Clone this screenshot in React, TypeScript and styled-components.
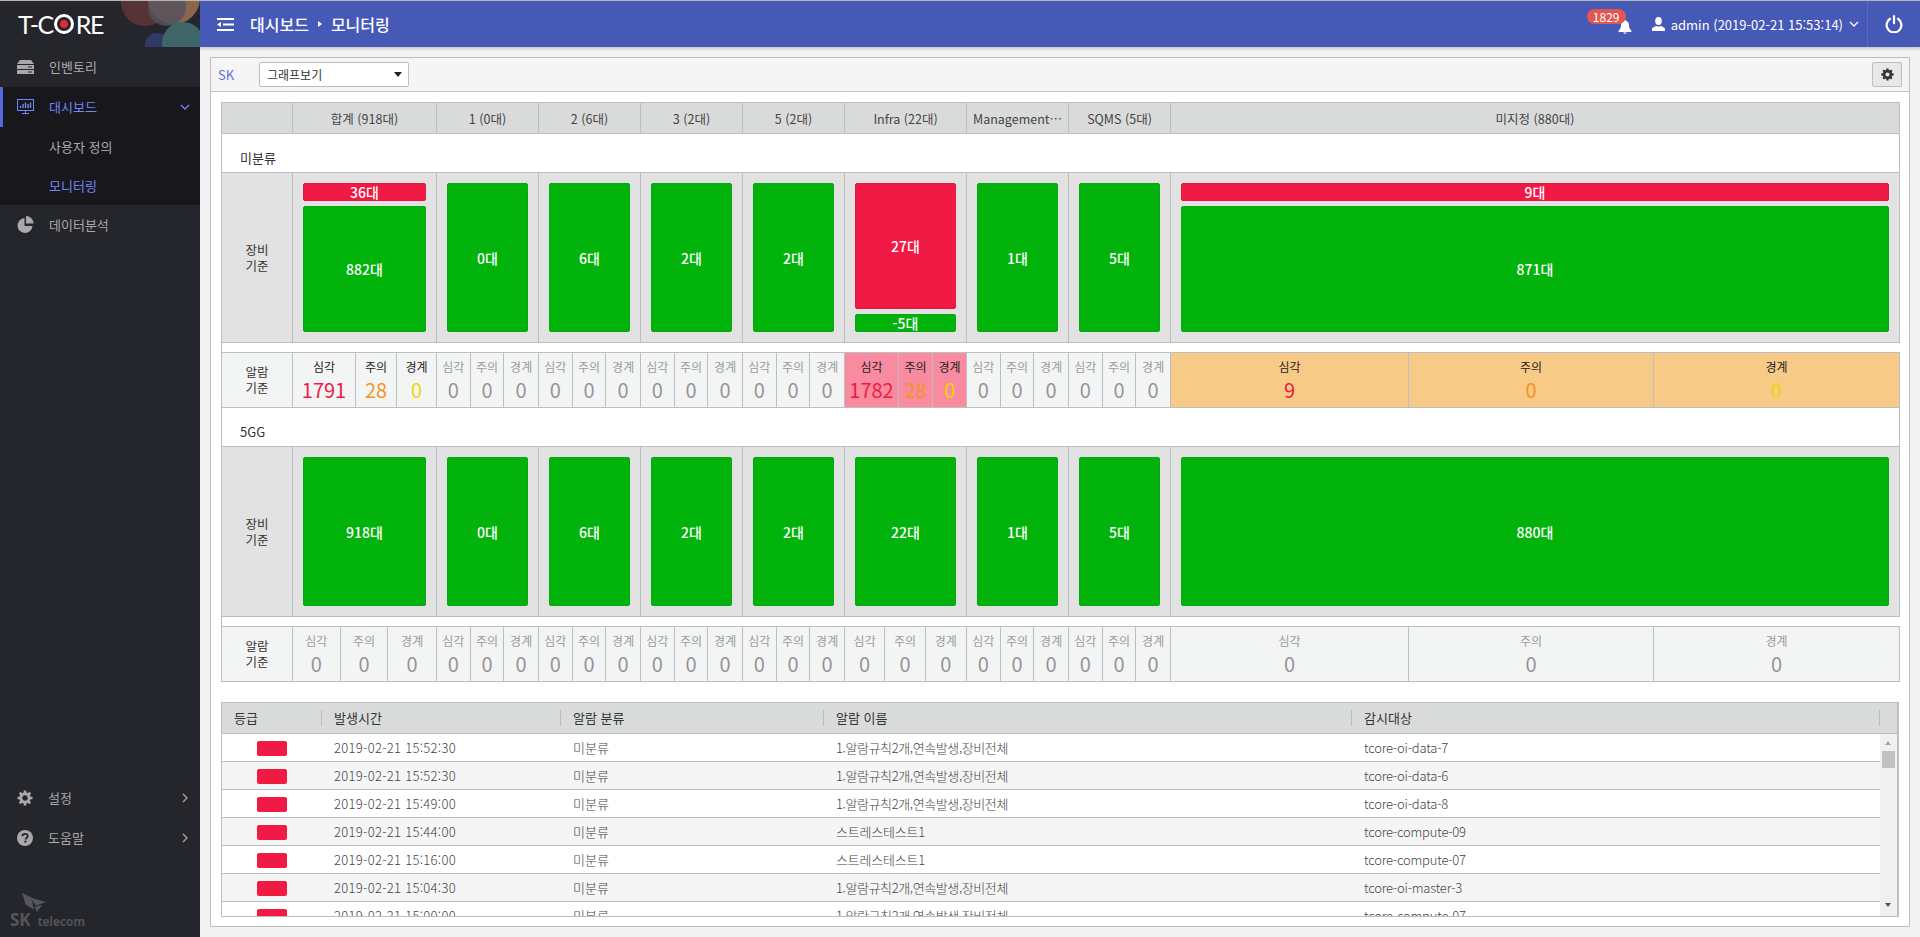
import React from 'react';
import styled, { createGlobalStyle } from 'styled-components';

const COLUMNS = '71px 144px 102px 102px 102px 102px 122px 102px 102px 729px';
const FONT = '"Noto Sans CJK KR", "Noto Sans", sans-serif';

const GlobalStyle = createGlobalStyle`
  html, body {
    margin: 0;
    padding: 0;
    height: 100%;
    background: #f3f3f3;
    overflow: hidden;
  }
  * { box-sizing: border-box; }
  #root { height: 100%; }
`;

const Page = styled.div`
  display: flex;
  height: 937px;
  border-top: 1px solid #b5b5b5;
  font-family: ${FONT};
  font-size: 13px;
  color: #333;
`;

/* sidebar */
const Sidebar = styled.aside`
  width: 200px;
  flex: none;
  display: flex;
  flex-direction: column;
  background: #25262c;
  position: relative;
`;

const LogoBar = styled.div`
  height: 46px;
  flex: none;
  position: relative;
  overflow: hidden;
  display: flex;
  align-items: center;
  padding-left: 18px;
  background: #25262c;
`;

const LogoBubbles = styled.svg`
  position: absolute;
  left: 0;
  top: 0;
`;

const LogoText = styled.div`
  position: relative;
  display: flex;
  align-items: center;
  font-family: "Lato", sans-serif;
  font-size: 25px;
  line-height: 26px;
  color: #fff;
  letter-spacing: -1.5px;
`;

const LogoRing = styled.svg`
  margin: 0 2px 0 1px;
`;

const NavItem = styled.div<{ $active?: boolean }>`
  height: 40px;
  display: flex;
  align-items: center;
  padding: 0 10px 1px 17px;
  gap: 15px;
  font-size: 13px;
  color: ${p => (p.$active ? '#6f86f5' : '#a9a9a9')};
  background: ${p => (p.$active ? '#18181c' : 'transparent')};
  box-shadow: ${p => (p.$active ? 'inset 3px 0 0 #5468e0' : 'none')};
  svg.icon { flex: none; }
  span { flex: 1; }
`;

const SubMenu = styled.div`
  background: #18181c;
  height: 78px;
  display: flex;
  flex-direction: column;
`;

const SubItem = styled.div<{ $active?: boolean }>`
  flex: 1;
  display: flex;
  align-items: center;
  padding-left: 49px;
  font-size: 13px;
  color: ${p => (p.$active ? '#6f86f5' : '#a9a9a9')};
`;

const BottomNav = styled.div`
  margin-top: auto;
  padding-bottom: 79px;
`;

const Telecom = styled.div`
  position: absolute;
  left: 10px;
  bottom: 6px;
  display: flex;
  align-items: baseline;
  gap: 7px;
  color: #55565b;
  font-family: "Noto Sans", sans-serif;
  svg { position: absolute; left: 12px; top: -19px; }
`;

const TelecomSk = styled.span`
  font-size: 17px;
  font-weight: 700;
  line-height: 18px;
`;

const TelecomName = styled.span`
  font-size: 12px;
  font-weight: 600;
  line-height: 18px;
`;

/* top bar */
const Main = styled.main`
  flex: 1;
  min-width: 0;
  display: flex;
  flex-direction: column;
`;

const TopBar = styled.header`
  height: 46px;
  flex: none;
  display: flex;
  align-items: center;
  background: #4759b7;
  color: #fff;
  box-shadow: 0 2px 3px rgba(0, 0, 0, 0.18);
  padding-left: 17px;
`;

const Crumbs = styled.div`
  display: flex;
  align-items: center;
  margin-left: 16px;
  font-size: 16px;
  font-weight: 500;
  gap: 9px;
`;

const CrumbArrow = styled.i`
  width: 0;
  height: 0;
  border-left: 4px solid #fff;
  border-top: 3.5px solid transparent;
  border-bottom: 3.5px solid transparent;
`;

const TopRight = styled.div`
  margin-left: auto;
  display: flex;
  align-items: center;
  height: 100%;
`;

const BellWrap = styled.div`
  position: relative;
  width: 14px;
  height: 14px;
  margin-right: 20px;
  margin-top: 4px;
`;

const Badge = styled.span`
  position: absolute;
  right: 6px;
  top: -10px;
  width: 39px;
  height: 15px;
  border-radius: 8px;
  background: #e2574f;
  color: #fff;
  font-size: 12px;
  line-height: 15px;
  text-align: center;
`;

const UserName = styled.div`
  display: flex;
  align-items: center;
  gap: 6px;
  font-size: 13px;
  padding-right: 8px;
`;

const PowerBox = styled.div`
  width: 53px;
  height: 100%;
  display: flex;
  align-items: center;
  justify-content: center;
  border-left: 1px solid #5a6bc4;
`;

/* panel */
const Panel = styled.section`
  margin: 10px 10px 0;
  height: 870px;
  border: 1px solid #bdbdbd;
  background: #fff;
  display: flex;
  flex-direction: column;
  overflow: hidden;
`;

const Toolbar = styled.div`
  height: 34px;
  flex: none;
  display: flex;
  align-items: center;
  background: #f5f5f5;
  border-bottom: 1px solid #c4c4c4;
  padding: 0 7px 0 7px;
  font-size: 13px;
`;

const CompanyName = styled.span`
  color: #5a6fd8;
  width: 41px;
`;

const SelectBox = styled.div`
  width: 150px;
  height: 25px;
  display: flex;
  align-items: center;
  justify-content: space-between;
  background: #fff;
  border: 1px solid #bdbdbd;
  border-radius: 2px;
  padding: 0 6px 0 7px;
  color: #333;
  font-size: 12px;
`;

const Caret = styled.i`
  width: 0;
  height: 0;
  border-top: 5px solid #222;
  border-left: 4.5px solid transparent;
  border-right: 4.5px solid transparent;
`;

const GearButton = styled.div`
  margin-left: auto;
  width: 30px;
  height: 25px;
  display: flex;
  align-items: center;
  justify-content: center;
  background: #e8e8e8;
  border: 1px solid #bdbdbd;
  border-radius: 2px;
`;

const Content = styled.div`
  padding: 10px 10px 0 10px;
`;

/* status table */
const StatusTable = styled.div`
  display: grid;
  grid-template-columns: ${COLUMNS};
  border-left: 1px solid #bcbfc2;
`;

const HeadCell = styled.div`
  height: 32px;
  display: flex;
  align-items: center;
  justify-content: center;
  padding: 0 6px;
  background: #d9dbdb;
  border: 1px solid #bcbfc2;
  border-width: 1px 1px 1px 0;
  color: #444;
  font-size: 12.5px;
  overflow: hidden;
  white-space: nowrap;
`;

const CellText = styled.span`
  overflow: hidden;
  text-overflow: ellipsis;
`;

const GroupRow = styled.div`
  grid-column: 1 / -1;
  height: 39px;
  display: flex;
  align-items: center;
  padding: 9px 0 0 18px;
  background: #fff;
  border-right: 1px solid #bcbfc2;
  border-bottom: 1px solid #bcbfc2;
  color: #333;
`;

const RowTitle = styled.div<{ $device?: boolean }>`
  display: flex;
  align-items: center;
  justify-content: center;
  text-align: center;
  font-size: 12.5px;
  line-height: 16px;
  white-space: pre-line;
  background: ${p => (p.$device ? '#e2e2e2' : '#f3f5f5')};
  border: 1px solid #bcbfc2;
  border-width: ${p => (p.$device ? '0 1px 1px 0' : '1px 1px 1px 0')};
  color: #333;
`;

const DeviceCell = styled.div`
  height: 170px;
  display: flex;
  flex-direction: column;
  gap: 5px;
  padding: 10px;
  background: #e2e2e2;
  border: 1px solid #bcbfc2;
  border-width: 0 1px 1px 0;
`;

const Bar = styled.div<{ $kind: 'ok' | 'bad'; $small?: boolean }>`
  height: ${p => (p.$small ? '18px' : 'auto')};
  flex: ${p => (p.$small ? 'none' : '1')};
  display: flex;
  align-items: center;
  justify-content: center;
  border-radius: 2px;
  border: 1px solid ${p => (p.$kind === 'ok' ? '#0aa512' : '#dc1c42')};
  background: ${p => (p.$kind === 'ok' ? '#02b30b' : '#f01a44')};
  color: #fff;
  font-size: 14px;
  font-weight: 500;
`;

const Spacer = styled.div`
  grid-column: 1 / -1;
  height: 9px;
  background: #fff;
`;

const AlarmCell = styled.div<{ $cols: string; $tone?: 'pink' | 'amber' }>`
  height: 56px;
  display: grid;
  grid-template-columns: ${p => p.$cols};
  border: 1px solid #bcbfc2;
  border-width: 1px 1px 1px 0;
  background: ${p =>
    p.$tone === 'pink' ? '#f88ba0' : p.$tone === 'amber' ? '#f8ca88' : '#f3f5f5'};
`;

const AlarmItem = styled.div`
  display: flex;
  flex-direction: column;
  align-items: center;
  padding-top: 5px;
  border-right: 1px solid #bcbfc2;
  &:last-child { border-right: 0; }
`;

const AlarmName = styled.div<{ $on?: boolean }>`
  font-size: 12px;
  line-height: 17px;
  color: ${p => (p.$on ? '#222' : '#9a9a9a')};
`;

const AlarmCount = styled.div<{ $level: number; $on?: boolean }>`
  font-size: 20px;
  line-height: 26px;
  margin-top: 2px;
  color: ${p =>
    !p.$on ? '#959595' : p.$level === 0 ? '#f01a44' : p.$level === 1 ? '#f7931e' : '#f5d300'};
`;

/* event grid */
const EventGrid = styled.div`
  margin-top: 20px;
  height: 215px;
  border: 1px solid #bcbfc2;
  border-right-width: 2px;
  position: relative;
  overflow: hidden;
`;

const EventHead = styled.div`
  height: 31px;
  display: grid;
  grid-template-columns: 100px 239px 263px 528px 528px 1fr;
  background: #d9dbdb;
  border-bottom: 1px solid #bcbfc2;
  align-items: center;
`;

const EventHeadCell = styled.div`
  height: 16px;
  line-height: 16px;
  border-right: 1px solid #bdbfbf;
  padding-left: 12px;
  color: #333;
  &:last-child { border-right: 0; }
`;

const EventBody = styled.div`
  margin-right: 17px;
`;

const EventRow = styled.div`
  height: 28px;
  display: grid;
  grid-template-columns: 100px 239px 263px 528px 1fr;
  align-items: center;
  border-bottom: 1px solid #bcbfc2;
  color: #444;
  font-weight: 300;
  background: #fff;
  &:nth-child(even) { background: #f5f5f5; }
`;

const EventCell = styled.div<{ $track?: number }>`
  padding-left: 12px;
  white-space: nowrap;
  letter-spacing: ${p => p.$track ?? 0}px;
`;

const Severity = styled.div`
  width: 30px;
  height: 15px;
  margin-left: 35px;
  margin-top: 1px;
  border-radius: 2px;
  background: #f01a44;
`;

const ScrollTrack = styled.div`
  position: absolute;
  right: 0;
  top: 31px;
  bottom: 0;
  width: 17px;
  background: #f0f0f0;
`;

const ScrollThumb = styled.div`
  position: absolute;
  left: 2px;
  top: 17px;
  width: 13px;
  height: 17px;
  background: #c1c1c1;
`;

const ScrollArrow = styled.i<{ $down?: boolean }>`
  position: absolute;
  left: 5px;
  ${p => (p.$down ? 'bottom: 9px;' : 'top: 7px;')}
  width: 0;
  height: 0;
  border-left: 3.5px solid transparent;
  border-right: 3.5px solid transparent;
  ${p => (p.$down ? 'border-top: 4px solid #505050;' : 'border-bottom: 4px solid #a3a3a3;')}
`;

const LABELS = ['심각', '주의', '경계'];
const HEADS = [
  '합계 (918대)', '1 (0대)', '2 (6대)', '3 (2대)', '5 (2대)',
  'Infra (22대)', 'Management (1대)', 'SQMS (5대)', '미지정 (880대)',
];

type Stack = { top?: [string, 'ok' | 'bad']; main: [string, 'ok' | 'bad']; bottom?: [string, 'ok' | 'bad'] };

const DEVICES_A: Stack[] = [
  { top: ['36대', 'bad'], main: ['882대', 'ok'] },
  { main: ['0대', 'ok'] },
  { main: ['6대', 'ok'] },
  { main: ['2대', 'ok'] },
  { main: ['2대', 'ok'] },
  { main: ['27대', 'bad'], bottom: ['-5대', 'ok'] },
  { main: ['1대', 'ok'] },
  { main: ['5대', 'ok'] },
  { top: ['9대', 'bad'], main: ['871대', 'ok'] },
];

const DEVICES_B: Stack[] = ['918대', '0대', '6대', '2대', '2대', '22대', '1대', '5대', '880대'].map(t => ({
  main: [t, 'ok'],
}));

type Alarm = { cols: string; counts: number[]; on?: boolean; tone?: 'pink' | 'amber' };
const even = '1fr 1fr 1fr';

const ALARMS_A: Alarm[] = [
  { cols: '63px 41px 1fr', counts: [1791, 28, 0], on: true },
  { cols: even, counts: [0, 0, 0] },
  { cols: even, counts: [0, 0, 0] },
  { cols: even, counts: [0, 0, 0] },
  { cols: even, counts: [0, 0, 0] },
  { cols: '54px 34px 1fr', counts: [1782, 28, 0], on: true, tone: 'pink' },
  { cols: even, counts: [0, 0, 0] },
  { cols: even, counts: [0, 0, 0] },
  { cols: '238px 245px 1fr', counts: [9, 0, 0], on: true, tone: 'amber' },
];

const ALARMS_B: Alarm[] = [
  { cols: even, counts: [0, 0, 0] },
  { cols: even, counts: [0, 0, 0] },
  { cols: even, counts: [0, 0, 0] },
  { cols: even, counts: [0, 0, 0] },
  { cols: even, counts: [0, 0, 0] },
  { cols: even, counts: [0, 0, 0] },
  { cols: even, counts: [0, 0, 0] },
  { cols: even, counts: [0, 0, 0] },
  { cols: '238px 245px 1fr', counts: [0, 0, 0] },
];

const RULE = '1.알람규칙2개,연속발생,장비전체';
const EVENTS = [
  ['2019-02-21 15:52:30', RULE, 'tcore-oi-data-7'],
  ['2019-02-21 15:52:30', RULE, 'tcore-oi-data-6'],
  ['2019-02-21 15:49:00', RULE, 'tcore-oi-data-8'],
  ['2019-02-21 15:44:00', '스트레스테스트1', 'tcore-compute-09'],
  ['2019-02-21 15:16:00', '스트레스테스트1', 'tcore-compute-07'],
  ['2019-02-21 15:04:30', RULE, 'tcore-oi-master-3'],
  ['2019-02-21 15:00:00', RULE, 'tcore-compute-07'],
];

const Chevron = ({ down, color = '#a9a9a9' }: { down?: boolean; color?: string }) => (
  <svg width="10" height="10" viewBox="0 0 10 10" fill="none" stroke={color} strokeWidth="1.3">
    <path d={down ? 'M1 3l4 4 4-4' : 'M3 1l4 4-4 4'} />
  </svg>
);

const ServerIcon = () => (
  <svg className="icon" width="17" height="14" viewBox="0 0 17 14" fill="#a9a9a9">
    <path d="M3 0h11l3 4H0z" />
    <path fillRule="evenodd" d="M0 5h17v4H0zM11 6.5v1h4v-1zM0 10h17v4H0zM11 11.5v1h4v-1z" />
  </svg>
);

const MonitorIcon = () => (
  <svg className="icon" width="17" height="16" viewBox="0 0 17 16" fill="none" stroke="#6f86f5">
    <rect x="0.5" y="0.5" width="16" height="11" />
    <path d="M5 14.5h7M8.5 12v2" />
    <path d="M3.5 9V7M6 9V5M8.5 9V3.5M11 9V5M13.5 9V3.5" strokeWidth="1.4" />
  </svg>
);

const PieIcon = () => (
  <svg className="icon" width="17" height="17" viewBox="0 0 17 17" fill="#a9a9a9">
    <path d="M7.5 1.5v8h8A7.5 7.5 0 1 1 7.5 1.5z" transform="translate(0 .5)" />
    <path d="M9 0a7.5 7.5 0 0 1 7.5 7.5H9z" />
  </svg>
);

const GearIcon = ({ size = 16, color = '#a9a9a9' }: { size?: number; color?: string }) => (
  <svg className="icon" width={size} height={size} viewBox="0 0 16 16" fill="none" stroke={color}>
    <circle cx="8" cy="8" r="4.2" strokeWidth="3" />
    <path d="M8 .5v2.6M8 12.9v2.6M.5 8h2.6M12.9 8h2.6M2.7 2.7l1.9 1.9M11.4 11.4l1.9 1.9M2.7 13.3l1.9-1.9M11.4 4.6l1.9-1.9" strokeWidth="2.6" />
  </svg>
);

const HelpIcon = () => (
  <svg className="icon" width="16" height="16" viewBox="0 0 16 16">
    <circle cx="8" cy="8" r="8" fill="#a9a9a9" />
    <path d="M5.3 6.2C5.4 4.6 6.6 3.8 8 3.8c1.6 0 2.7.9 2.7 2.2 0 2-2.2 1.9-2.2 3.6" fill="none" stroke="#25262c" strokeWidth="1.8" />
    <rect x="7.4" y="10.6" width="2" height="2" fill="#25262c" />
  </svg>
);

const MenuToggle = () => (
  <svg width="17" height="13" viewBox="0 0 17 13" fill="#fff">
    <rect x="0" y="0" width="17" height="2" />
    <rect x="6" y="5.5" width="11" height="2" />
    <rect x="0" y="11" width="17" height="2" />
    <path d="M4 4v5L0 6.5z" />
  </svg>
);

const BellIcon = () => (
  <svg width="14" height="14" viewBox="0 0 14 14" fill="#fff">
    <path d="M7 0c.6 0 1 .4 1 1 2.2.5 3 2.3 3 4.2 0 2.5.8 4 2.4 5.3V12H.6v-1.5C2.2 9.2 3 7.7 3 5.2 3 3.3 3.8 1.5 6 1c0-.6.4-1 1-1z" />
    <path d="M5.2 12.5h3.6A1.9 1.9 0 0 1 5.2 12.5z" />
  </svg>
);

const UserIcon = () => (
  <svg width="13" height="14" viewBox="0 0 13 14" fill="#fff">
    <ellipse cx="6.5" cy="4" rx="3.3" ry="4" />
    <path d="M0 14v-2c0-1.5 2.5-2.3 4.3-3 1.3.8 3.1.8 4.400 0 1.800.7 4.300 1.500 4.300 3v2z" />
  </svg>
);

const PowerIcon = () => (
  <svg width="18" height="18" viewBox="0 0 18 18" fill="none" stroke="#fff" strokeWidth="2.2" strokeLinecap="round">
    <path d="M5 3.8a7.4 7.4 0 1 0 8 0" />
    <path d="M9 1.2v7" />
  </svg>
);

const DarkGear = () => (
  <svg width="13" height="13" viewBox="0 0 16 16" fill="none" stroke="#333">
    <circle cx="8" cy="8" r="4.2" strokeWidth="3.2" />
    <path d="M8 .5v2.6M8 12.9v2.6M.5 8h2.6M12.9 8h2.6M2.7 2.7l1.9 1.9M11.4 11.4l1.9 1.9M2.7 13.3l1.9-1.9M11.4 4.6l1.9-1.9" strokeWidth="2.8" />
  </svg>
);

const Devices = ({ rows }: { rows: Stack[] }) => (
  <>
    {rows.map((s, i) => (
      <DeviceCell key={i}>
        {s.top && <Bar $kind={s.top[1]} $small>{s.top[0]}</Bar>}
        <Bar $kind={s.main[1]}>{s.main[0]}</Bar>
        {s.bottom && <Bar $kind={s.bottom[1]} $small>{s.bottom[0]}</Bar>}
      </DeviceCell>
    ))}
  </>
);

const Alarms = ({ rows }: { rows: Alarm[] }) => (
  <>
    {rows.map((a, i) => (
      <AlarmCell key={i} $cols={a.cols} $tone={a.tone}>
        {a.counts.map((c, j) => (
          <AlarmItem key={j}>
            <AlarmName $on={a.on}>{LABELS[j]}</AlarmName>
            <AlarmCount $level={j} $on={a.on}>{c}</AlarmCount>
          </AlarmItem>
        ))}
      </AlarmCell>
    ))}
  </>
);

export default function App() {
  return (
    <>
      <GlobalStyle />
      <Page lang="ko">
        <Sidebar>
          <LogoBar>
            <LogoBubbles width="200" height="46" viewBox="0 0 200 46">
              <circle cx="145" cy="1" r="24" fill="#6a3838" opacity="0.75" />
              <circle cx="174" cy="-3" r="26" fill="#a87658" opacity="0.8" />
              <circle cx="167" cy="6" r="19" fill="#55525c" opacity="0.85" />
              <circle cx="157" cy="44" r="12" fill="#2f3a66" />
              <circle cx="183" cy="42" r="21" fill="#3e6567" />
            </LogoBubbles>
            <LogoText>
              T-C
              <LogoRing width="20" height="20" viewBox="0 0 20 20">
                <circle cx="10" cy="10" r="8.5" fill="none" stroke="#fff" strokeWidth="3" />
                <circle cx="10" cy="10" r="4" fill="#e02a2f" />
              </LogoRing>
              RE
            </LogoText>
          </LogoBar>
          <NavItem><ServerIcon /><span>인벤토리</span></NavItem>
          <NavItem $active><MonitorIcon /><span>대시보드</span><Chevron down color="#6f86f5" /></NavItem>
          <SubMenu>
            <SubItem>사용자 정의</SubItem>
            <SubItem $active>모니터링</SubItem>
          </SubMenu>
          <NavItem><PieIcon /><span>데이터분석</span></NavItem>
          <BottomNav>
            <NavItem><GearIcon /><span>설정</span><Chevron /></NavItem>
            <NavItem><HelpIcon /><span>도움말</span><Chevron /></NavItem>
          </BottomNav>
          <Telecom>
            <svg width="24" height="22" viewBox="0 0 26 22" fill="#55565b">
              <path d="M0 0l10 5 3 13-9-5z" />
              <path d="M9 5l17 5-11 4z" />
              <path d="M14 15l8-2-6 8z" />
            </svg>
            <TelecomSk>SK</TelecomSk>
            <TelecomName>telecom</TelecomName>
          </Telecom>
        </Sidebar>
        <Main>
          <TopBar>
            <MenuToggle />
            <Crumbs>
              <span>대시보드</span>
              <CrumbArrow />
              <span>모니터링</span>
            </Crumbs>
            <TopRight>
              <BellWrap>
                <BellIcon />
                <Badge>1829</Badge>
              </BellWrap>
              <UserName>
                <UserIcon />
                <span>admin (2019-02-21 15:53:14)</span>
                <Chevron down color="#fff" />
              </UserName>
              <PowerBox><PowerIcon /></PowerBox>
            </TopRight>
          </TopBar>
          <Panel>
            <Toolbar>
              <CompanyName>SK</CompanyName>
              <SelectBox>
                <span>그래프보기</span>
                <Caret />
              </SelectBox>
              <GearButton><DarkGear /></GearButton>
            </Toolbar>
            <Content>
              <StatusTable>
                <HeadCell />
                {HEADS.map(h => (
                  <HeadCell key={h}><CellText>{h}</CellText></HeadCell>
                ))}
                <GroupRow>미분류</GroupRow>
                <RowTitle $device>{'장비\n기준'}</RowTitle>
                <Devices rows={DEVICES_A} />
                <Spacer />
                <RowTitle>{'알람\n기준'}</RowTitle>
                <Alarms rows={ALARMS_A} />
                <GroupRow>5GG</GroupRow>
                <RowTitle $device>{'장비\n기준'}</RowTitle>
                <Devices rows={DEVICES_B} />
                <Spacer />
                <RowTitle>{'알람\n기준'}</RowTitle>
                <Alarms rows={ALARMS_B} />
              </StatusTable>
              <EventGrid>
                <EventHead>
                  <EventHeadCell>등급</EventHeadCell>
                  <EventHeadCell>발생시간</EventHeadCell>
                  <EventHeadCell>알람 분류</EventHeadCell>
                  <EventHeadCell>알람 이름</EventHeadCell>
                  <EventHeadCell>감시대상</EventHeadCell>
                  <EventHeadCell />
                </EventHead>
                <EventBody>
                  {EVENTS.map((e, i) => (
                    <EventRow key={i}>
                      <Severity />
                      <EventCell $track={0.3}>{e[0]}</EventCell>
                      <EventCell>미분류</EventCell>
                      <EventCell $track={e[1] === RULE ? -0.4 : -0.2}>{e[1]}</EventCell>
                      <EventCell $track={-0.2}>{e[2]}</EventCell>
                    </EventRow>
                  ))}
                </EventBody>
                <ScrollTrack>
                  <ScrollArrow />
                  <ScrollThumb />
                  <ScrollArrow $down />
                </ScrollTrack>
              </EventGrid>
            </Content>
          </Panel>
        </Main>
      </Page>
    </>
  );
}
